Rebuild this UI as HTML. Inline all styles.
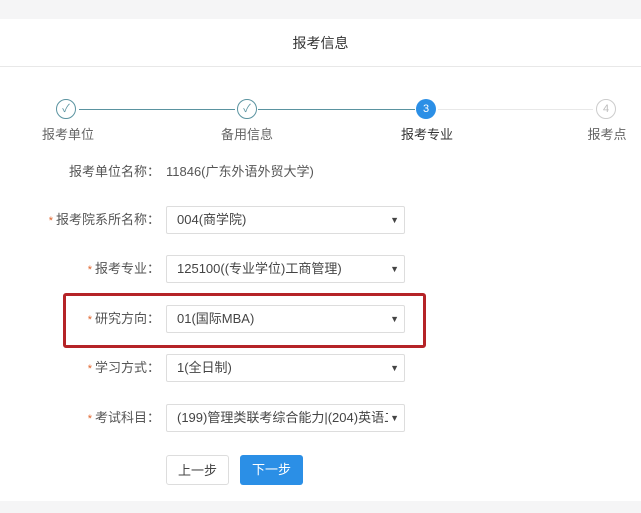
<!DOCTYPE html>
<html><head><meta charset="utf-8"><style>
*{margin:0;padding:0;box-sizing:border-box}
body{width:641px;height:513px;background:#f5f5f6;font-family:"Liberation Sans","Noto Sans CJK SC",sans-serif;position:relative;overflow:hidden;color:#555}
.main{position:absolute;left:0;top:19px;width:641px;height:482px;background:#fff}
.hdr{position:absolute;left:0;top:19px;width:641px;height:48px;border-bottom:1px solid #e8e8e8;text-align:center;line-height:48px;font-size:14px;color:#333}
.c{position:absolute;width:20px;height:20px;border-radius:50%;top:99px;text-align:center;line-height:18px;font-size:11px}
.done{border:1px solid #5a93a0;color:#5a93a0}
.cur{background:#2b8fe6;color:#fff;line-height:20px}
.todo{border:1px solid #ccc;color:#bbb}
.ln{position:absolute;top:109px;height:1px}
.sl{position:absolute;top:124px;font-size:13px;width:80px;text-align:center;color:#666}
.lbl{position:absolute;right:481px;font-size:13px;color:#555;white-space:nowrap;line-height:28px}
.lbl b{color:#e0642c;font-weight:normal;font-size:11px;margin-right:3px}
.sel{position:absolute;left:166px;width:239px;height:28px;border:1px solid #ddd;border-radius:2px;font-size:13px;line-height:26px;padding-left:10px;color:#444;white-space:nowrap;overflow:hidden}
.sel:after{content:"▼";position:absolute;right:5px;top:0;font-size:9px;color:#444;background:#fff;padding-left:2px}
.btn{position:absolute;top:455px;width:63px;height:30px;border-radius:3px;font-size:13px;text-align:center;line-height:30px}
</style></head><body>
<div class="main"></div>
<div class="hdr">报考信息</div>
<div class="ln" style="left:79px;width:156px;background:#5a93a0"></div>
<div class="ln" style="left:258px;width:157px;background:#5a93a0"></div>
<div class="ln" style="left:438px;width:155px;background:#e8e8e8"></div>
<div class="c done" style="left:56px">✓</div>
<div class="c done" style="left:237px">✓</div>
<div class="c cur" style="left:416px">3</div>
<div class="c todo" style="left:596px">4</div>
<div class="sl" style="left:28px">报考单位</div>
<div class="sl" style="left:207px">备用信息</div>
<div class="sl" style="left:387px;color:#333">报考专业</div>
<div class="sl" style="left:567px">报考点</div>
<div class="lbl" style="top:158px">报考单位名称：</div>
<div style="position:absolute;left:166px;top:158px;line-height:28px;font-size:13px;color:#555">11846(广东外语外贸大学)</div>
<div class="lbl" style="top:206px"><b>*</b>报考院系所名称：</div>
<div class="sel" style="top:206px">004(商学院)</div>
<div class="lbl" style="top:255px"><b>*</b>报考专业：</div>
<div class="sel" style="top:255px">125100((专业学位)工商管理)</div>
<div class="lbl" style="top:305px"><b>*</b>研究方向：</div>
<div class="sel" style="top:305px">01(国际MBA)</div>
<div style="position:absolute;left:63px;top:293px;width:363px;height:55px;border:3px solid #b52327;border-radius:3px"></div>
<div class="lbl" style="top:354px"><b>*</b>学习方式：</div>
<div class="sel" style="top:354px">1(全日制)</div>
<div class="lbl" style="top:404px"><b>*</b>考试科目：</div>
<div class="sel" style="top:404px">(199)管理类联考综合能力|(204)英语二</div>
<div class="btn" style="left:166px;border:1px solid #ddd;color:#444;background:#fff">上一步</div>
<div class="btn" style="left:240px;background:#2b8fe6;color:#fff">下一步</div>
</body></html>
